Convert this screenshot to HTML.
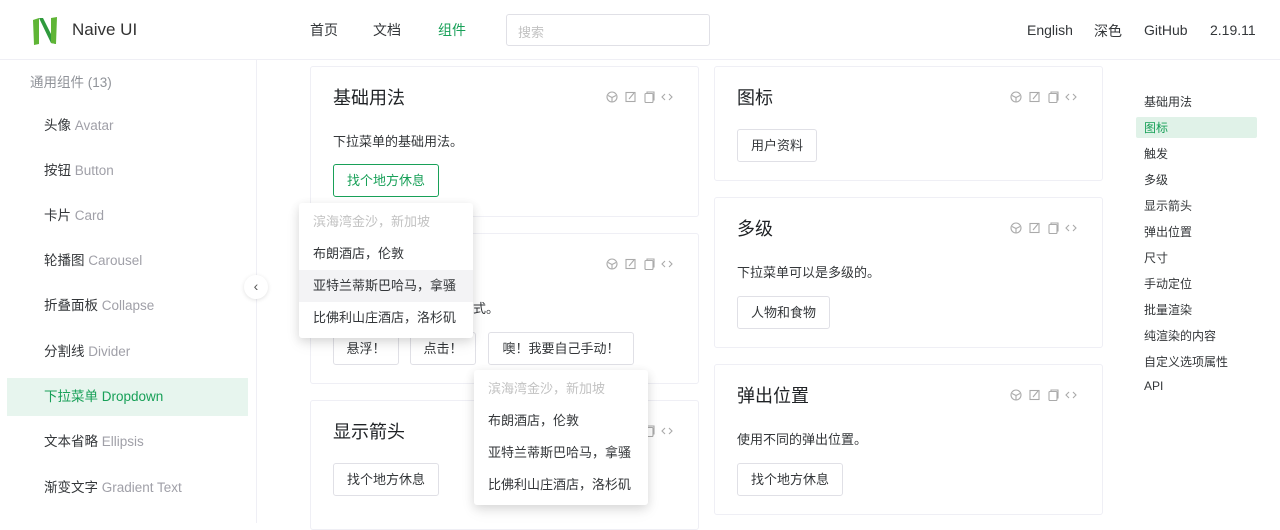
<!DOCTYPE html>
<html><head><meta charset="utf-8"><style>
*{box-sizing:border-box;margin:0;padding:0}
body{width:1280px;height:523px;overflow:hidden;background:#fff;font-family:"Liberation Sans","Noto Sans CJK SC",sans-serif;font-size:14px;color:#333639;position:relative}
.a{position:absolute;white-space:nowrap}
.hdr{position:absolute;left:0;top:0;width:1280px;height:60px;border-bottom:1px solid #efeff5}
.side{position:absolute;left:0;top:60px;width:257px;height:463px;border-right:1px solid #efeff5}
.si{position:absolute;left:44px;font-size:13.5px;color:#333639;line-height:20px}
.si span{color:#a0a0a8}
.card{position:absolute;border:1px solid #efeff5;border-radius:3px;background:#fff}
.ct{position:absolute;font-size:18px;color:#1f2225}
.tx{position:absolute;font-size:13px}
.btn{position:absolute;height:33px;border:1px solid #e0e0e6;border-radius:3px;font-size:13px;line-height:31px;text-align:center;background:#fff}
.ic{position:absolute}
.dd{position:absolute;width:174px;height:135px;background:#fff;border-radius:3px;box-shadow:0 3px 10px rgba(0,0,0,.12),0 6px 16px rgba(0,0,0,.06)}
.dd div{height:32px;line-height:32px;padding-left:14px;font-size:13px;color:#333639}
.dd div.g{color:#c2c2c2}
.dd div.h{background:#f3f3f5}
.an{position:absolute;left:1144px;font-size:12px;color:#333639}
</style></head><body>
<svg width="0" height="0" style="position:absolute"><defs><g id="icons" fill="none" stroke="#aaa" stroke-width="1.1"><circle cx="6" cy="6" r="5"/><path d="M2 4.5 L6 6.5 L10 4.5 M6 6.5 V11"/><rect x="20" y="1.5" width="9" height="9"/><path d="M23 8 L28 2"/><rect x="39" y="2.5" width="8" height="9" rx="1"/><path d="M41 2.5 V1 H48 V9.5"/><path d="M59 3 L56 6 L59 9 M63 3 L66 6 L63 9"/></g></defs></svg>
<div class="hdr">
<svg class="a" style="left:31px;top:16px" width="28" height="30" viewBox="0 0 28 30"><path d="M2 4 L8 2 L8 28 L3 29 Z" fill="#5fb536"/><path d="M8 2 L20 27 L25 28 L12 2 Z" fill="#2f9a3d"/><path d="M20 2 L26 1 L25 28 L20 27 Z" fill="#5fb536"/></svg>
<div class="a" style="left:72px;top:20px;font-size:17px;color:#333">Naive UI</div>
<div class="a" style="left:310px;top:20px;font-size:14px">首页</div>
<div class="a" style="left:373px;top:20px;font-size:14px">文档</div>
<div class="a" style="left:438px;top:20px;font-size:14px;color:#18a058">组件</div>
<div class="a" style="left:506px;top:14px;width:204px;height:32px;border:1px solid #e0e0e6;border-radius:3px;padding:7px 11px;font-size:13px;color:#c2c2c2">搜索</div>
<div class="a" style="left:1027px;top:22px;font-size:14px">English</div>
<div class="a" style="left:1094px;top:21px;font-size:14px">深色</div>
<div class="a" style="left:1144px;top:22px;font-size:14px">GitHub</div>
<div class="a" style="left:1210px;top:22px;font-size:14px">2.19.11</div>
</div>
<div class="side">
<div class="si" style="left:30px;top:13px;color:#909399">通用组件 (13)</div>
<div class="si" style="top:56px">头像 <span>Avatar</span></div>
<div class="si" style="top:101px">按钮 <span>Button</span></div>
<div class="si" style="top:146px">卡片 <span>Card</span></div>
<div class="si" style="top:191px">轮播图 <span>Carousel</span></div>
<div class="si" style="top:236px">折叠面板 <span>Collapse</span></div>
<div class="si" style="top:282px">分割线 <span>Divider</span></div>
<div class="a" style="left:7px;top:318px;width:241px;height:38px;background:#e7f5ee"></div>
<div class="si" style="top:327px;color:#18a058">下拉菜单 <span style="color:#18a058">Dropdown</span></div>
<div class="si" style="top:372px">文本省略 <span>Ellipsis</span></div>
<div class="si" style="top:418px">渐变文字 <span>Gradient Text</span></div>
</div>
<div class="a" style="left:244px;top:275px;width:24px;height:24px;border-radius:50%;background:#fff;box-shadow:0 1px 4px rgba(0,0,0,.12);text-align:center;line-height:22px;font-size:14px;color:#555">‹</div>

<div class="card" style="left:310px;top:66px;width:389px;height:151px"></div>
<div class="ct" style="left:333px;top:84px">基础用法</div>
<svg class="ic" style="left:606px;top:91px" width="70" height="13"><use href="#icons"/></svg>
<div class="tx" style="left:333px;top:131px">下拉菜单的基础用法。</div>
<div class="btn" style="left:333px;top:164px;width:106px;border-color:#18a058;color:#18a058">找个地方休息</div>

<div class="card" style="left:310px;top:233px;width:389px;height:151px"></div>
<svg class="ic" style="left:606px;top:258px" width="70" height="13"><use href="#icons"/></svg>
<div class="tx" style="left:473px;top:298px">式。</div>
<div class="btn" style="left:333px;top:332px;width:66px">悬浮！</div>
<div class="btn" style="left:410px;top:332px;width:66px">点击！</div>
<div class="btn" style="left:488px;top:332px;width:146px">噢！我要自己手动！</div>

<div class="card" style="left:310px;top:400px;width:389px;height:130px"></div>
<div class="ct" style="left:333px;top:418px">显示箭头</div>
<svg class="ic" style="left:606px;top:425px" width="70" height="13"><use href="#icons"/></svg>
<div class="btn" style="left:333px;top:463px;width:106px">找个地方休息</div>

<div class="card" style="left:714px;top:66px;width:389px;height:115px"></div>
<div class="ct" style="left:737px;top:84px">图标</div>
<svg class="ic" style="left:1010px;top:91px" width="70" height="13"><use href="#icons"/></svg>
<div class="btn" style="left:737px;top:129px;width:80px">用户资料</div>

<div class="card" style="left:714px;top:197px;width:389px;height:151px"></div>
<div class="ct" style="left:737px;top:215px">多级</div>
<svg class="ic" style="left:1010px;top:222px" width="70" height="13"><use href="#icons"/></svg>
<div class="tx" style="left:737px;top:262px">下拉菜单可以是多级的。</div>
<div class="btn" style="left:737px;top:296px;width:93px">人物和食物</div>

<div class="card" style="left:714px;top:364px;width:389px;height:151px"></div>
<div class="ct" style="left:737px;top:382px">弹出位置</div>
<svg class="ic" style="left:1010px;top:389px" width="70" height="13"><use href="#icons"/></svg>
<div class="tx" style="left:737px;top:429px">使用不同的弹出位置。</div>
<div class="btn" style="left:737px;top:463px;width:106px">找个地方休息</div>

<div class="dd" style="left:299px;top:203px;padding-top:3px"><div class="g">滨海湾金沙，新加坡</div><div>布朗酒店，伦敦</div><div class="h">亚特兰蒂斯巴哈马，拿骚</div><div>比佛利山庄酒店，洛杉矶</div></div>
<div class="dd" style="left:474px;top:370px;padding-top:3px"><div class="g">滨海湾金沙，新加坡</div><div>布朗酒店，伦敦</div><div>亚特兰蒂斯巴哈马，拿骚</div><div>比佛利山庄酒店，洛杉矶</div></div>

<div class="a" style="left:1136px;top:117px;width:121px;height:21px;background:#e0f2e8;border-radius:2px"></div>
<div class="an" style="top:93px">基础用法</div>
<div class="an" style="top:119px;color:#18a058">图标</div>
<div class="an" style="top:145px">触发</div>
<div class="an" style="top:171px">多级</div>
<div class="an" style="top:197px">显示箭头</div>
<div class="an" style="top:223px">弹出位置</div>
<div class="an" style="top:249px">尺寸</div>
<div class="an" style="top:275px">手动定位</div>
<div class="an" style="top:301px">批量渲染</div>
<div class="an" style="top:327px">纯渲染的内容</div>
<div class="an" style="top:353px">自定义选项属性</div>
<div class="an" style="top:379px">API</div>
</body></html>
